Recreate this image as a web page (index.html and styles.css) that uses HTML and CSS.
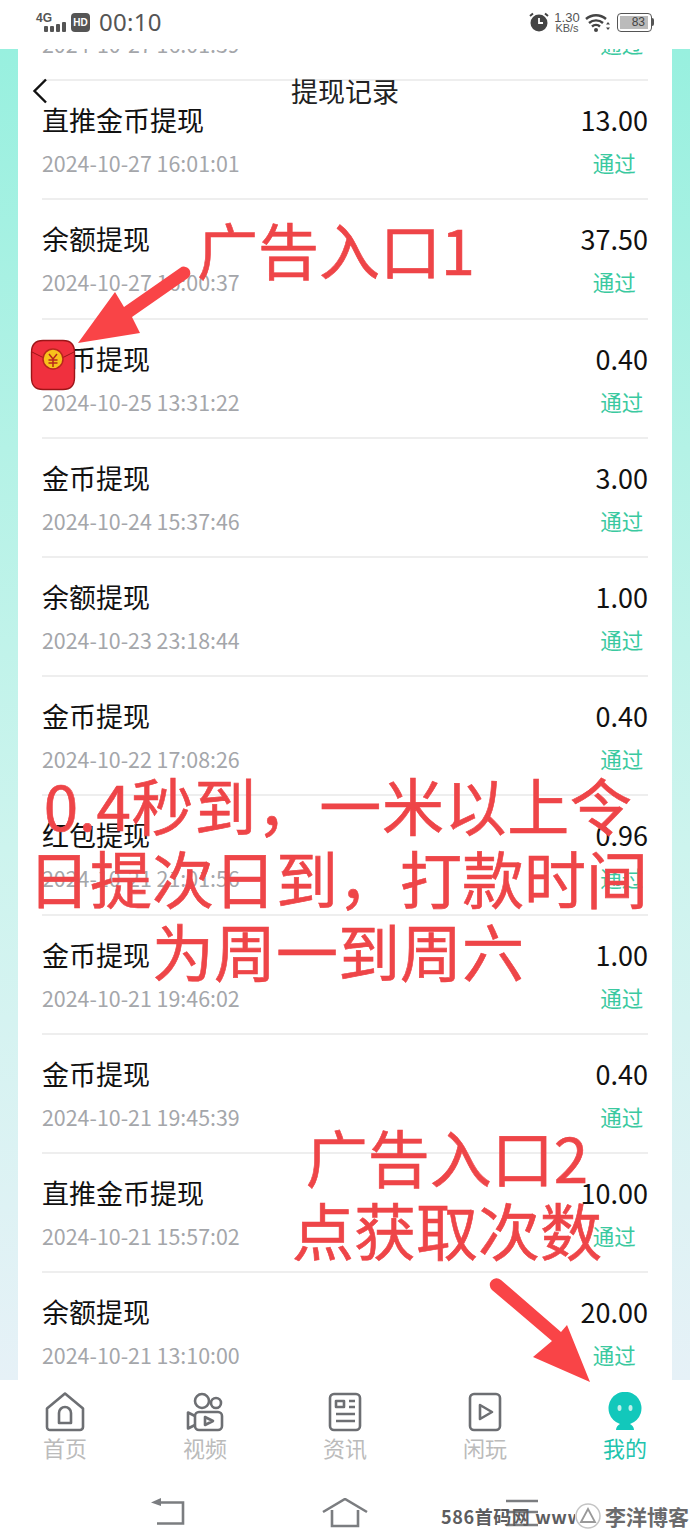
FILE: index.html
```html
<!DOCTYPE html>
<html lang="zh-CN">
<head>
  <meta charset="UTF-8" />
  <meta name="viewport" content="width=device-width, initial-scale=1.0" />
  <title>提现记录</title>
  <link rel="stylesheet" href="styles.css">
</head>
<body>
  <div class="phone">
    <div class="status-bar">
      <div class="status-left">
        <div class="signal">
          <span class="signal-label">4G</span>
          <svg class="signal-bars" width="22" height="10" viewBox="0 0 22 10"><g fill="#555"><rect x="0" y="4" width="4" height="6" rx="1"/><rect x="6" y="4" width="4" height="6" rx="1"/><rect x="12" y="2" width="4" height="8" rx="1"/><rect x="18" y="0" width="4" height="10" rx="1"/></g></svg>
        </div>
        <span class="hd-badge">HD</span>
        <span class="clock">00:10</span>
      </div>
      <div class="status-right">
        <svg width="20" height="20" viewBox="0 0 20 20"><circle cx="10" cy="11" r="8.500" fill="#444"/><path d="M10 6v5h4" fill="none" stroke="#fff" stroke-width="1.800"/><path d="M1 4l3-2.500M19 4l-3-2.500" stroke="#444" stroke-width="2"/></svg>
        <div class="speed"><span>1.30</span><span>KB/s</span></div>
        <svg width="25" height="20" viewBox="0 0 25 20"><path d="M1 7a15 15 0 0 1 20 0M4 11a10.500 10.500 0 0 1 14 0M7 14.500a6 6 0 0 1 8 0" fill="none" stroke="#444" stroke-width="2.400"/><circle cx="11" cy="18" r="2" fill="#444"/><path d="M23 10l-2 2.500h4zM23 18l-2-2.500h4z" fill="#444"/></svg>
        <div class="battery"><div class="battery-body"><span class="battery-level">83</span></div><span class="battery-tip"></span></div>
      </div>
    </div>

    <div class="page">
      <div class="card">
        <ul class="record-list">
          <li class="record"><div class="record-info"><span class="record-name">金币提现</span><span class="record-date">2024-10-27 16:01:39</span></div><div class="record-side"><span class="record-amount">1.00</span><span class="record-state">通过</span></div></li>
          <li class="record"><div class="record-info"><span class="record-name">直推金币提现</span><span class="record-date">2024-10-27 16:01:01</span></div><div class="record-side"><span class="record-amount">13.00</span><span class="record-state">通过</span></div></li>
          <li class="record"><div class="record-info"><span class="record-name">余额提现</span><span class="record-date">2024-10-27 16:00:37</span></div><div class="record-side"><span class="record-amount">37.50</span><span class="record-state">通过</span></div></li>
          <li class="record"><div class="record-info"><span class="record-name">金币提现</span><span class="record-date">2024-10-25 13:31:22</span></div><div class="record-side"><span class="record-amount">0.40</span><span class="record-state">通过</span></div></li>
          <li class="record"><div class="record-info"><span class="record-name">金币提现</span><span class="record-date">2024-10-24 15:37:46</span></div><div class="record-side"><span class="record-amount">3.00</span><span class="record-state">通过</span></div></li>
          <li class="record"><div class="record-info"><span class="record-name">余额提现</span><span class="record-date">2024-10-23 23:18:44</span></div><div class="record-side"><span class="record-amount">1.00</span><span class="record-state">通过</span></div></li>
          <li class="record"><div class="record-info"><span class="record-name">金币提现</span><span class="record-date">2024-10-22 17:08:26</span></div><div class="record-side"><span class="record-amount">0.40</span><span class="record-state">通过</span></div></li>
          <li class="record"><div class="record-info"><span class="record-name">红包提现</span><span class="record-date">2024-10-21 21:01:56</span></div><div class="record-side"><span class="record-amount">0.96</span><span class="record-state">通过</span></div></li>
          <li class="record"><div class="record-info"><span class="record-name">金币提现</span><span class="record-date">2024-10-21 19:46:02</span></div><div class="record-side"><span class="record-amount">1.00</span><span class="record-state">通过</span></div></li>
          <li class="record"><div class="record-info"><span class="record-name">金币提现</span><span class="record-date">2024-10-21 19:45:39</span></div><div class="record-side"><span class="record-amount">0.40</span><span class="record-state">通过</span></div></li>
          <li class="record"><div class="record-info"><span class="record-name">直推金币提现</span><span class="record-date">2024-10-21 15:57:02</span></div><div class="record-side"><span class="record-amount">10.00</span><span class="record-state">通过</span></div></li>
          <li class="record"><div class="record-info"><span class="record-name">余额提现</span><span class="record-date">2024-10-21 13:10:00</span></div><div class="record-side"><span class="record-amount">20.00</span><span class="record-state">通过</span></div></li>
        </ul>
      </div>
      <div class="page-header">
        <svg class="back-icon" width="16" height="26" viewBox="0 0 16 26"><path d="M14 1.500L2.500 13 14 24.500" fill="none" stroke="#111" stroke-width="2.400"/></svg>
        <span class="page-title">提现记录</span>
      </div>
    </div>

    <nav class="tabbar">
      <a class="tab">
        <svg width="40" height="40" viewBox="0 0 40 40"><path d="M2 16.500L20 1.500l18 15V35a3 3 0 0 1-3 3H5a3 3 0 0 1-3-3z" fill="none" stroke="#6d6f73" stroke-width="2.600" stroke-linejoin="round"/><path d="M14 31V21a6 6 0 0 1 12 0v10z" fill="none" stroke="#6d6f73" stroke-width="2.600" stroke-linejoin="round"/></svg>
        <span>首页</span>
      </a>
      <a class="tab">
        <svg width="40" height="40" viewBox="0 0 40 40"><g fill="none" stroke="#6d6f73" stroke-width="2.600" stroke-linejoin="round"><circle cx="17" cy="9" r="7"/><circle cx="31" cy="11" r="5"/><rect x="10" y="20" width="27" height="18" rx="4"/><path d="M10 24l-7-3.500v16l7-3.500"/><path d="M20 25l8 4-8 4z"/></g></svg>
        <span>视频</span>
      </a>
      <a class="tab">
        <svg width="40" height="40" viewBox="0 0 40 40"><g fill="none" stroke="#6d6f73" stroke-width="2.600" stroke-linejoin="round"><rect x="5" y="2" width="30" height="36" rx="4"/><rect x="11" y="9" width="8" height="6"/><path d="M24 9h6M24 15h6M11 22h19M11 29h19"/></g></svg>
        <span>资讯</span>
      </a>
      <a class="tab">
        <svg width="40" height="40" viewBox="0 0 40 40"><g fill="none" stroke="#6d6f73" stroke-width="2.600" stroke-linejoin="round"><rect x="5" y="2" width="30" height="36" rx="4"/><path d="M15 13l12 7-12 7z"/></g></svg>
        <span>闲玩</span>
      </a>
      <a class="tab tab-active">
        <svg width="40" height="40" viewBox="0 0 40 40"><path d="M11 38c0-3 2-5 4-6a16.500 16.500 0 1 1 10 0c2 1 4 3 4 6z" fill="#12c8bb"/><ellipse cx="14.500" cy="16" rx="2" ry="3" fill="#bff0ea"/><ellipse cx="25.500" cy="16" rx="2" ry="3" fill="#bff0ea"/></svg>
        <span>我的</span>
      </a>
    </nav>

    <div class="system-nav">
      <svg width="34" height="28" viewBox="0 0 34 28"><path d="M10 4.500h22v21H6" fill="none" stroke="#7b7d80" stroke-width="2.600"/><path d="M10 0v8L0 4.500z" fill="#7b7d80"/></svg>
      <svg width="46" height="30" viewBox="0 0 46 30"><path d="M1 14L23 1l22 13M10 12v16h26V12" fill="none" stroke="#7b7d80" stroke-width="2.600"/></svg>
      <svg width="34" height="30" viewBox="0 0 34 30"><path d="M1 3h32M1 14h32M1 27h32" fill="none" stroke="#7b7d80" stroke-width="2.600"/></svg>
    </div>

    <!-- annotations drawn on top of the screenshot -->
    <svg class="arrows" width="690" height="1535" viewBox="0 0 690 1535">
      <g fill="#f94447">
        <path d="M78 343L115 292 124 307 180 268a6 6 0 0 1 8 10L132 317 140 333z"/>
        <path d="M590 1382L533 1357 552 1341 492 1290a6 6 0 0 1 9-10L561 1332 567 1325z"/>
      </g>
    </svg>
    <div class="note note-one">广告入口1</div>
    <div class="note note-two"><span class="note-wide">0.4秒到，一米以上令</span><span>日提次日到，打款时间</span><span>为周一到周六</span></div>
    <div class="note note-three"><span>广告入口2</span><span>点获取次数</span></div>

    <svg class="red-packet" width="46" height="52" viewBox="0 0 46 52">
      <path d="M13 1.500h20c8 0 11.500 4 11.500 12v25c0 8-4 12-11.500 12H13c-8 0-11.500-4-11.500-12v-25c0-8 3.500-12 11.500-12z" fill="#f0303e" stroke="#9c1518" stroke-width="1.400"/>
      <path d="M2 13q21 14 42 0" fill="none" stroke="#9c1518" stroke-width="1"/>
      <circle cx="23" cy="20" r="10" fill="#f8c21c" stroke="#b8261c" stroke-width="1.500"/>
      <path d="M19 15l4 5 4-5M18.500 21h9M18.500 24h9M23 20v8" fill="none" stroke="#b8261c" stroke-width="1.500"/>
    </svg>

    <div class="watermark">
      <span class="watermark-site">586首码网 www</span>
      <svg class="watermark-logo" width="26" height="26" viewBox="0 0 26 26"><circle cx="13" cy="13" r="12" fill="rgba(255,255,255,.85)" stroke="#c4c4c4" stroke-width="1.500"/><path d="M6 19L13 6l7 13zM9 19h8" fill="none" stroke="#999" stroke-width="1.800"/></svg>
      <span class="watermark-blog">李洋博客</span>
    </div>
  </div>
</body>
</html>
```

FILE: styles.css
```css
* {
  box-sizing: border-box;
}

body {
  margin: 0;
  background: #fff;
  font-family: "Noto Sans CJK SC", "Noto Sans", sans-serif;
}

.phone {
  position: relative;
  width: 690px;
  height: 1535px;
  overflow: hidden;
  display: flex;
  flex-direction: column;
}

/* status bar */
.status-bar {
  height: 49px;
  flex: none;
  padding: 0 36px 5px 36px;
  display: flex;
  justify-content: space-between;
  align-items: center;
  background: #fff;
  position: relative;
  z-index: 2;
}

.status-left,
.status-right {
  display: flex;
  align-items: center;
}

.signal {
  display: flex;
  flex-direction: column;
  width: 33px;
}

.signal-label {
  font: bold 12px/11px "Liberation Sans", sans-serif;
  color: #555;
  margin-bottom: -2px;
}

.signal-bars {
  margin-left: 8px;
}

.hd-badge {
  margin-left: 2px;
  width: 19px;
  height: 19px;
  border-radius: 4px;
  background: #555;
  color: #fff;
  font: bold 10px/19px "Liberation Sans", sans-serif;
  text-align: center;
}

.clock {
  margin-left: 9px;
  font: 24px/28px "Noto Sans", sans-serif;
  color: #555;
  letter-spacing: 0.3px;
}

.status-right {
  gap: 5px;
}

.speed {
  display: flex;
  flex-direction: column;
  align-items: center;
  font: 11px/10px "Liberation Sans", sans-serif;
  color: #555;
  width: 26px;
}

.speed span:first-child {
  font-size: 13px;
  line-height: 11px;
}

.battery {
  display: flex;
  align-items: center;
  margin-left: 2px;
}

.battery-body {
  width: 35px;
  height: 19px;
  border: 1px solid #555;
  border-radius: 4px;
  padding: 2px;
}

.battery-level {
  display: block;
  width: 28px;
  height: 13px;
  background: #bbb;
  color: #444;
  font: 12px/13px "Liberation Sans", sans-serif;
  text-align: right;
  padding-right: 3px;
}

.battery-tip {
  width: 2px;
  height: 8px;
  background: #555;
  border-radius: 0 2px 2px 0;
}

/* list */
.page {
  position: relative;
  flex: 1;
  overflow: hidden;
  background: linear-gradient(180deg, #98f0df 0%, #b4f2e6 30%, #cdf4ee 60%, #e6f1f7 100%);
}

.card {
  margin: 0 18px;
  height: 100%;
  background: #fff;
  padding: 0 24px;
  overflow: hidden;
}

/* list is scrolled: the first row is cut off by the status bar */
.record-list {
  list-style: none;
  margin: -87px 0 0;
  padding: 0;
}

.record {
  height: 119.2px;
  border-bottom: 2px solid #eee;
  padding-top: 19px;
  display: flex;
  justify-content: space-between;
}

.record-info,
.record-side {
  display: flex;
  flex-direction: column;
}

.record-side {
  align-items: center;
}

.record-name,
.record-amount {
  font-size: 27px;
  line-height: 40px;
  color: #111;
}

.record-date {
  margin-top: 7px;
  font-size: 21.400px;
  line-height: 32px;
  color: #a4a6aa;
}

.record-state {
  margin-top: 7px;
  font-size: 21.500px;
  line-height: 32px;
  color: #3ac9a0;
}

.page-header {
  position: absolute;
  top: 22px;
  left: 0;
  right: 0;
  height: 40px;
  display: flex;
  justify-content: center;
  align-items: center;
}

.back-icon {
  position: absolute;
  left: 32px;
  top: 7px;
}

.page-title {
  font-size: 27px;
  line-height: 40px;
  color: #222;
}

/* bottom tabs */
.tabbar {
  height: 98px;
  flex: none;
  background: #fff;
  display: grid;
  grid-template-columns: repeat(5, 140px);
  justify-content: center;
  padding-top: 12px;
}

.tab {
  display: flex;
  flex-direction: column;
  align-items: center;
  font-size: 22px;
  line-height: 32px;
  color: #bbb;
}

.tab span {
  margin-top: -1px;
}

.tab-active {
  color: #1fc4ae;
}

.system-nav {
  height: 57px;
  flex: none;
  background: #fff;
  display: flex;
  justify-content: center;
  gap: 137px;
  padding: 20px 0 0 0;
}

/* annotations */
.arrows {
  position: absolute;
  top: 0;
  left: 0;
  pointer-events: none;
}

.note {
  position: absolute;
  color: #ee4548;
  font-size: 62px;
  line-height: 73px;
  white-space: nowrap;
  display: flex;
  flex-direction: column;
  align-items: center;
  -webkit-text-stroke: 0.6px #ee4548;
}

.note-one {
  left: 197px;
  top: 212px;
  font-size: 61px;
}

.note-two {
  left: 0;
  width: 676px;
  top: 768px;
}

.note-wide {
  letter-spacing: 0.6px;
}

.note-three {
  left: 292px;
  width: 310px;
  top: 1120px;
}

.red-packet {
  position: absolute;
  left: 30px;
  top: 339px;
}

.watermark {
  position: absolute;
  left: 441px;
  top: 1501px;
  display: flex;
  align-items: center;
  font-weight: bold;
  line-height: 30px;
  white-space: nowrap;
}

.watermark-site {
  color: #5d5d5f;
  width: 134px;
  overflow: hidden;
  font-size: 18px;
  letter-spacing: 0.6px;
}

.watermark-logo {
  flex: none;
}

.watermark-blog {
  margin-left: 4px;
  color: #6a6a6c;
  font-size: 21px;
  text-shadow: 0 0 2px #fff;
}
```
